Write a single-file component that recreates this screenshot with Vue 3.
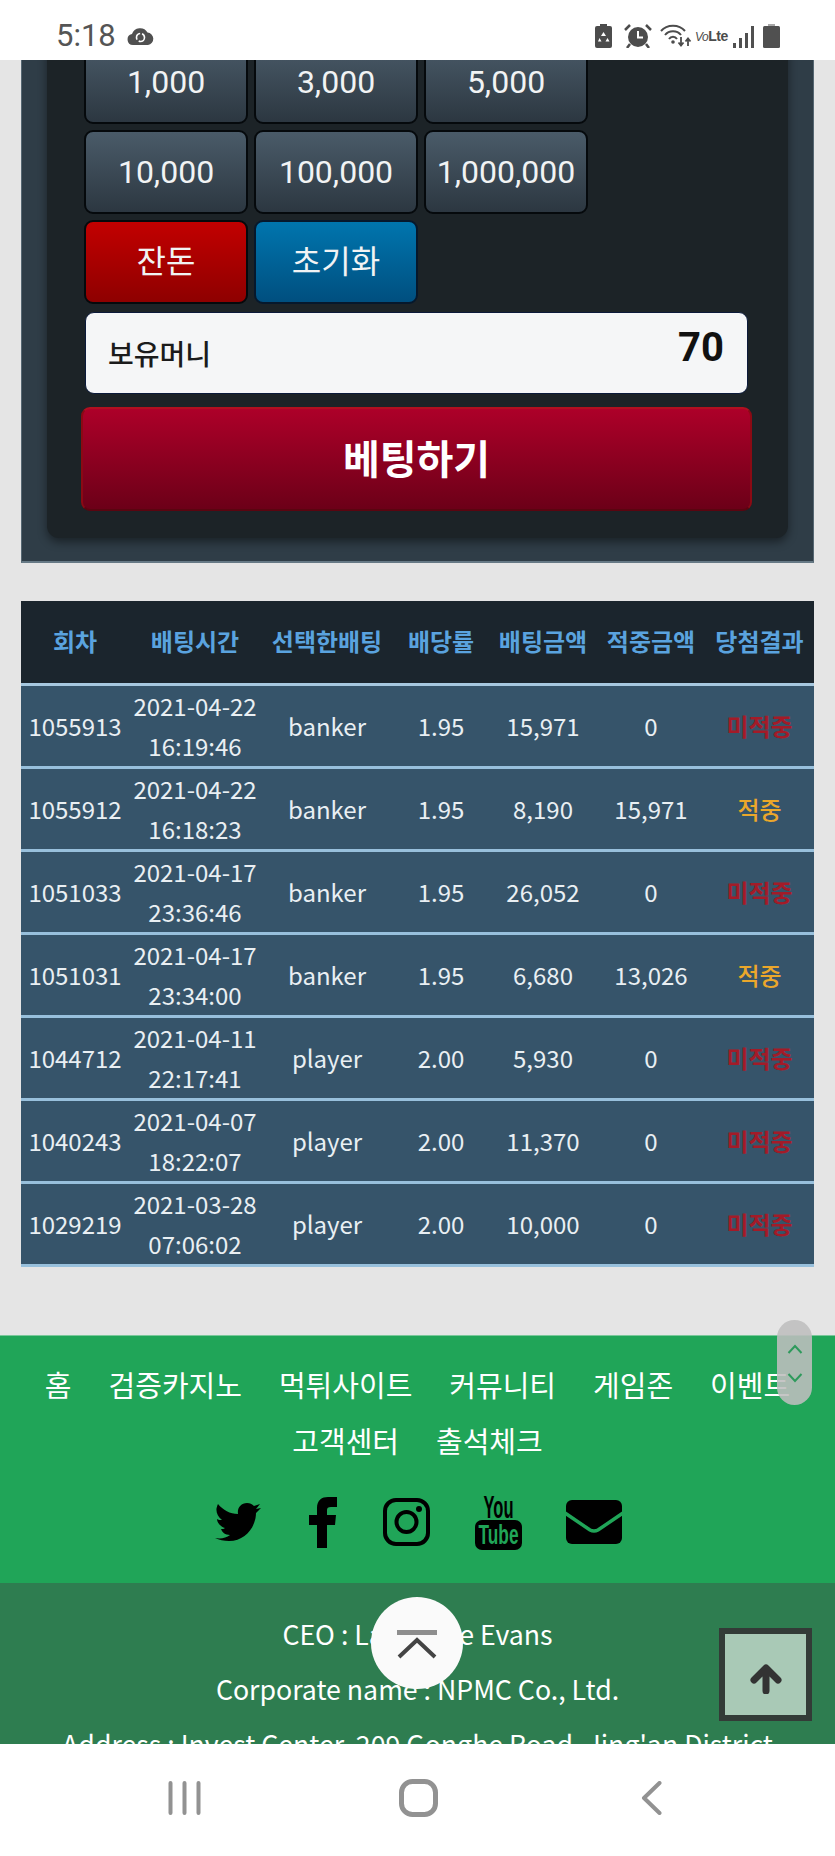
<script setup>
const amounts = ['1,000', '3,000', '5,000', '10,000', '100,000', '1,000,000']
const heads = ['회차', '배팅시간', '선택한배팅', '배당률', '배팅금액', '적중금액', '당첨결과']
const rows = [
  ['1055913', '2021-04-22', '16:19:46', 'banker', '1.95', '15,971', '0', '미적중'],
  ['1055912', '2021-04-22', '16:18:23', 'banker', '1.95', '8,190', '15,971', '적중'],
  ['1051033', '2021-04-17', '23:36:46', 'banker', '1.95', '26,052', '0', '미적중'],
  ['1051031', '2021-04-17', '23:34:00', 'banker', '1.95', '6,680', '13,026', '적중'],
  ['1044712', '2021-04-11', '22:17:41', 'player', '2.00', '5,930', '0', '미적중'],
  ['1040243', '2021-04-07', '18:22:07', 'player', '2.00', '11,370', '0', '미적중'],
  ['1029219', '2021-03-28', '07:06:02', 'player', '2.00', '10,000', '0', '미적중'],
]
const nav = ['홈', '검증카지노', '먹튀사이트', '커뮤니티', '게임존', '이벤트', '고객센터', '출석체크']
</script>

<template>
  <div class="screen">
    <header class="status">
      <span class="time">5:18</span>
      <svg class="cloud" width="27" height="18" viewBox="0 0 27 18">
        <path d="M6 18a5.5 5.5 0 0 1-1-10.900A8.500 8.500 0 0 1 20.500 5.500 6.300 6.300 0 0 1 21 18Z" fill="#505050"/>
        <circle cx="13.500" cy="10.500" r="4" fill="none" stroke="#fff" stroke-width="1.600" stroke-dasharray="8 2"/>
      </svg>
      <span class="grow"></span>
      <svg width="17" height="24" viewBox="0 0 17 24">
        <rect x="5" y="0" width="7" height="3" fill="#4c4c4c"/>
        <rect x="0" y="2" width="17" height="22" rx="2" fill="#4c4c4c"/>
        <path d="M8.500 8l2.500 4H6zM4.500 14l2 3.500H3zM12.500 14l2 3.500h-4z" fill="#fff"/>
      </svg>
      <svg class="s1" width="28" height="24" viewBox="0 0 28 24">
        <circle cx="14" cy="13" r="10" fill="#4c4c4c"/>
        <path d="M14 7v6.500h5" fill="none" stroke="#fff" stroke-width="2"/>
        <path d="M1 6l5-5M27 6l-5-5M6 20l-3 4M22 20l3 4" stroke="#4c4c4c" stroke-width="2.500"/>
      </svg>
      <svg class="s2" width="32" height="24" viewBox="0 0 32 24">
        <g fill="none" stroke="#4c4c4c" stroke-width="2">
          <path d="M1 7C7 0 19 0 25 7"/>
          <path d="M5 11c4-5 12-5 16 0"/>
          <path d="M9 15c2-3 6-3 8 0"/>
        </g>
        <circle cx="13" cy="18" r="1.800" fill="#4c4c4c"/>
        <path d="M21 13v8M18.500 18.500l2.500 3 2.500-3M28 22v-7M25.500 17.500l2.500-3 2.500 3" fill="none" stroke="#4c4c4c" stroke-width="1.800"/>
      </svg>
      <span class="volte"><i>Vo</i><b>Lte</b></span>
      <span class="bars"><i class="b1"></i><i class="b2"></i><i class="b3"></i><i class="b4"></i></span>
      <svg class="s3" width="17" height="24" viewBox="0 0 17 24">
        <rect x="5" y="0" width="7" height="3" fill="#a8a8a8"/>
        <rect x="0" y="2" width="17" height="22" rx="1.500" fill="#505050"/>
      </svg>
    </header>

    <main class="view">
      <div class="page">
        <section class="panel">
          <div class="inner">
            <div class="chips">
              <button v-for="a in amounts" :key="a" class="chip">{{ a }}</button>
              <button class="chip red">잔돈</button>
              <button class="chip blue">초기화</button>
            </div>
            <div class="money">
              <span class="money-label">보유머니</span>
              <strong class="money-value">70</strong>
            </div>
            <button class="bet">베팅하기</button>
          </div>
        </section>

        <table class="history">
          <thead>
            <tr><th v-for="h in heads" :key="h">{{ h }}</th></tr>
          </thead>
          <tbody>
            <tr v-for="r in rows" :key="r[0]">
              <td>{{ r[0] }}</td>
              <td>{{ r[1] }}<br>{{ r[2] }}</td>
              <td>{{ r[3] }}</td>
              <td>{{ r[4] }}</td>
              <td>{{ r[5] }}</td>
              <td>{{ r[6] }}</td>
              <td :class="r[7] === '적중' ? 'hit' : 'miss'">{{ r[7] }}</td>
            </tr>
          </tbody>
        </table>

        <footer class="footer">
          <div class="green">
            <nav class="links">
              <a v-for="n in nav" :key="n">{{ n }}</a>
            </nav>
            <div class="social">
              <svg class="tw" width="47" height="40" viewBox="0 0 47 40">
                <path d="M1 36c6 1 11 0 15-3-5 0-8-3-9-6 2 0 3 0 4-1-4-1-8-5-8-9 1 1 3 1 5 1C4 15 2 11 2.500 6.500 3 4 3.500 3 4 2c5 6 12 10 20 10-1-6 3-11 9-11 3 0 5 1 7 3l6-2-4 5 5-1-5 5c0 13-10 28-27 28-5 0-10-1-14-3Z" fill="#000"/>
              </svg>
              <svg class="fb" width="28" height="51" viewBox="0 0 28 51">
                <path d="M8 51V28H0V18h8v-7C8 3 13 0 19 0h9v10h-6c-3 0-4 1-4 3v5h9l-1 10h-8v23Z" fill="#000"/>
              </svg>
              <svg class="ig" width="47" height="48" viewBox="0 0 47 48">
                <rect x="2" y="2" width="43" height="44" rx="11" fill="none" stroke="#000" stroke-width="4"/>
                <circle cx="23.500" cy="24" r="10" fill="none" stroke="#000" stroke-width="4"/>
                <circle cx="36" cy="11" r="3" fill="#000"/>
              </svg>
              <svg class="yt" width="47" height="55" viewBox="0 0 47 55">
                <text class="yt-you" x="23.500" y="23" text-anchor="middle" textLength="30" lengthAdjust="spacingAndGlyphs">You</text>
                <rect x="0" y="25" width="47" height="30" rx="7" fill="#000"/>
                <text class="yt-tube" x="23.500" y="49" text-anchor="middle" textLength="40" lengthAdjust="spacingAndGlyphs">Tube</text>
              </svg>
              <svg class="ml" width="56" height="44" viewBox="0 0 56 44">
                <rect width="56" height="44" rx="6" fill="#000"/>
                <path d="M-1 13L24 30q4 2 8 0L57 13" fill="none" stroke="#20a558" stroke-width="3.500"/>
              </svg>
            </div>
          </div>
          <div class="dark">
            <p>CEO : Lawrence Evans</p>
            <p>Corporate name : NPMC Co., Ltd.</p>
            <p>Address : Invest Center, 209 Gonghe Road, Jing'an District</p>
          </div>
        </footer>
      </div>

      <div class="pill">
        <svg width="16" height="10" viewBox="0 0 16 10"><path d="M1.500 9L8 2l6.500 7" fill="none" stroke="#2e9a5c" stroke-width="2"/></svg>
        <svg width="16" height="10" viewBox="0 0 16 10"><path d="M1.500 1L8 8l6.500-7" fill="none" stroke="#2e9a5c" stroke-width="2"/></svg>
      </div>
      <div class="circle">
        <svg width="40" height="30" viewBox="0 0 40 30">
          <rect width="40" height="5" fill="#8e8e8e"/>
          <path d="M2 27L20 10l18 17" fill="none" stroke="#444" stroke-width="4"/>
        </svg>
      </div>
      <div class="totop">
        <svg width="32" height="30" viewBox="0 0 32 30">
          <path d="M16 27V5M4 16L16 4l12 12" fill="none" stroke="#333" stroke-width="7" stroke-linecap="round" stroke-linejoin="round"/>
        </svg>
      </div>
    </main>

    <div class="sysnav">
      <svg class="nudge" width="33" height="34" viewBox="0 0 33 34">
        <path d="M2.500 2v30M16.500 2v30M30.500 2v30" stroke="#929292" stroke-width="4" stroke-linecap="round"/>
      </svg>
      <svg class="home" width="39" height="38" viewBox="0 0 39 38">
        <rect x="2.500" y="2.500" width="34" height="33" rx="11" fill="none" stroke="#929292" stroke-width="5"/>
      </svg>
      <svg class="nudge" width="21" height="34" viewBox="0 0 21 34">
        <path d="M18.500 2L3 17l15.500 15" fill="none" stroke="#929292" stroke-width="4" stroke-linecap="round" stroke-linejoin="round"/>
      </svg>
    </div>
  </div>
</template>

<style>
html, body { margin: 0; background: #e5e5e5; }
</style>

<style scoped>
.screen {
  width: 835px;
  height: 1856px;
  display: flex;
  flex-direction: column;
  overflow: hidden;
  background: #e5e5e5;
  font-family: "Noto Sans CJK KR", "Noto Sans", sans-serif;
}
.status {
  height: 60px;
  flex: none;
  box-sizing: border-box;
  background: #fff;
  display: flex;
  align-items: center;
  padding: 12px 55px 0 56px;
  gap: 13px;
  position: relative;
  z-index: 2;
}
.time { font: 400 31px/36px Roboto, sans-serif; color: #555; }
.cloud { margin-left: -2px; }
.grow { flex: 1; }
.s1 { margin-left: -1px; }
.s2 { margin-left: -5px; }
.volte { width: 32px; margin-left: -10px; white-space: nowrap; color: #4c4c4c; font-family: "Liberation Sans", sans-serif; line-height: 24px; letter-spacing: -0.5px; }
.volte i { font-size: 12px; }
.volte b { font-size: 14px; }
.bars { display: flex; align-items: flex-end; gap: 3px; height: 22px; width: 21px; margin-left: -7px; margin-top: 2px; }
.bars i { width: 3px; background: #505050; display: block; }
.b1 { height: 5px; }
.b2 { height: 10px; }
.b3 { height: 15px; }
.b4 { height: 22px; }
.s3 { margin-left: -4px; }

.view {
  flex: 1;
  min-height: 0;
  overflow: hidden;
  position: relative;
}
.page { margin-top: -50px; }

.panel {
  margin: 0 21px;
  padding: 20px 25px 25px;
  background: #2f3d47;
  border-bottom: 2px solid #667985;
  border-left: 1px solid #566772;
  border-right: 1px solid #566772;
  box-sizing: border-box;
  height: 553px;
}
.inner {
  background: #1c2327;
  border-radius: 12px;
  padding: 10px 35px 27px 34px;
  height: 508px;
  box-sizing: border-box;
  box-shadow: 0 4px 10px rgba(0, 0, 0, 0.45);
}
.chips {
  display: grid;
  grid-template-columns: repeat(3, 164px);
  grid-auto-rows: 84px;
  gap: 6px;
  margin-left: 3px;
}
.chip {
  font: 400 32px/1 Roboto, "Noto Sans CJK KR", sans-serif;
  color: #f1f3f4;
  padding: 0;
  border: 2px solid #05090c;
  border-radius: 9px;
  background: linear-gradient(#4a5b69, #2c3741);
}
.chip.red { background: linear-gradient(#c20000, #8e0000); }
.chip.blue { background: linear-gradient(#0075ae, #004f7f); border-color: #06182c; }
.money {
  margin: 8px 5px 0 4px;
  height: 82px;
  box-sizing: border-box;
  background: #f5f6f7;
  border: 1px solid #0b1a3a;
  border-radius: 9px;
  display: flex;
  align-items: center;
  justify-content: space-between;
  padding: 0 23px 0 22px;
}
.money-label { font-size: 28px; line-height: 40px; color: #1b1b1b; font-weight: 500; margin-top: -1px; }
.money-value { font: 700 40px/40px Roboto, sans-serif; color: #111; margin-top: -10px; }
.bet {
  display: block;
  width: 671px;
  height: 104px;
  margin-top: 13px;
  padding: 0 0 4px;
  border: 2px solid #8a0a14;
  border-top-color: #b0101f;
  border-bottom-color: #5a0510;
  border-radius: 9px;
  background: linear-gradient(#ad0029, #6c0018);
  color: #fff;
  font: 700 40px/1 "Noto Sans CJK KR", sans-serif;
}

.history {
  width: 793px;
  margin: 38px 21px 68px;
  table-layout: fixed;
  border-collapse: separate;
  border-spacing: 0;
  color: #e9eff3;
  font-size: 24px;
  text-align: center;
}
.history th:nth-child(1) { width: 108px; }
.history th:nth-child(2) { width: 132px; }
.history th:nth-child(3) { width: 132px; }
.history th:nth-child(4) { width: 96px; }
.history th:nth-child(5) { width: 108px; }
.history th:nth-child(6) { width: 108px; }
.history th:nth-child(7) { width: 109px; }
.history th {
  height: 85px;
  padding: 0 0 3px;
  box-sizing: border-box;
  background: #1b252d;
  color: #5aa3df;
  font-weight: 700;
  border-bottom: 3px solid #a7c8df;
  white-space: nowrap;
}
.history td {
  height: 83px;
  padding: 0;
  box-sizing: border-box;
  background: #36546a;
  border-bottom: 3px solid #98c0dc;
  line-height: 40px;
  white-space: nowrap;
}
.history td.hit { color: #eba72b; font-weight: 500; }
.history td.miss { color: #a31b28; font-weight: 700; }

.green { background: #20a558; height: 248px; box-sizing: border-box; padding-top: 21px; border-top: 1px solid #7ac79a; }
.links {
  display: flex;
  flex-wrap: wrap;
  justify-content: center;
  column-gap: 37px;
  padding: 0 40px;
  color: #fff;
  font-size: 29px;
  line-height: 55.500px;
}
.social {
  display: flex;
  align-items: center;
  justify-content: center;
  height: 56px;
  margin-top: 26px;
}
.social svg { flex: none; overflow: visible; }
.fb { margin-left: 48px; }
.ig { margin-left: 46px; }
.yt { margin-left: 45px; }
.ml { margin-left: 44px; }
.yt-you { font: 700 31px "Liberation Sans", sans-serif; fill: #000; }
.yt-tube { font: 700 27px "Liberation Sans", sans-serif; fill: #20a558; }
.dark {
  background: #2e7d50;
  padding-top: 23px;
  text-align: center;
  color: #fff;
  font-size: 26.700px;
  line-height: 55px;
}
.dark p { margin: 0; white-space: nowrap; }

.pill {
  position: absolute;
  left: 777px;
  top: 1260px;
  width: 35px;
  height: 85px;
  border-radius: 18px;
  background: rgba(190, 190, 190, 0.88);
  box-sizing: border-box;
  padding-top: 24px;
  display: flex;
  flex-direction: column;
  align-items: center;
  gap: 19px;
}
.circle {
  position: absolute;
  left: 371px;
  top: 1537px;
  width: 92px;
  height: 92px;
  border-radius: 50%;
  background: #fafafa;
  display: flex;
  align-items: flex-start;
  justify-content: center;
  padding-top: 33px;
  box-sizing: border-box;
}
.totop {
  position: absolute;
  left: 719px;
  top: 1568px;
  width: 93px;
  height: 93px;
  box-sizing: border-box;
  border: 6px solid #333b37;
  background: #a9c9b6;
  display: flex;
  align-items: center;
  justify-content: center;
  padding-top: 8px;
}
.sysnav {
  height: 112px;
  flex: none;
  background: #fff;
  position: relative;
  z-index: 2;
  box-sizing: border-box;
  padding: 35px 173px 0 168px;
  display: flex;
  align-items: flex-start;
  justify-content: space-between;
}
.nudge { margin-top: 2px; }
.home { margin-right: 5px; }
</style>
